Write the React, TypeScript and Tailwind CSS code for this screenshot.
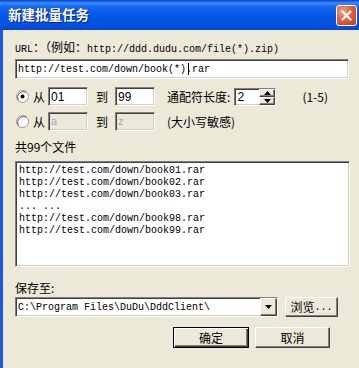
import React from 'react';

// classic win32 look helpers
const sunken = 'border border-t-[#808080] border-l-[#808080] border-b-white border-r-white shadow-[inset_1px_1px_0_#404040,inset_-1px_-1px_0_#d4d0c8]';
const raised = 'bg-[#ECE9D8] border border-t-white border-l-white border-b-[#404040] border-r-[#404040] shadow-[inset_-1px_-1px_0_#808080]';
const mono = "font-['Liberation_Mono','Noto_Sans_CJK_SC',monospace] text-[10px]";
const cjk = "font-['Noto_Sans_CJK_SC',sans-serif] text-[12px]";

const Mono = ({ children }: { children: React.ReactNode }) => <span className={mono}>{children}</span>

const Radio = ({ checked }: { checked?: boolean }) => (
  <svg width="13" height="13" viewBox="0 0 13 13" className="shrink-0">
    <circle cx="6.5" cy="6.5" r="6" fill="#fff" stroke="#9a9a9a" />
    <path d="M2.2 10.3 A6 6 0 0 1 10.3 2.2" fill="none" stroke="#5a5a5a" strokeWidth="1" />
    {checked && <circle cx="6.5" cy="6.5" r="2" fill="#000" />}
  </svg>
)

const Arrow = ({ up }: { up?: boolean }) => (
  <svg width="7" height="4" viewBox="0 0 7 4">
    <path d={up ? 'M3.5 0 L7 4 L0 4 Z' : 'M0 0 L7 0 L3.5 4 Z'} fill="#000" />
  </svg>
)

const files = [
  'http://test.com/down/book01.rar',
  'http://test.com/down/book02.rar',
  'http://test.com/down/book03.rar',
  '... ...',
  'http://test.com/down/book98.rar',
  'http://test.com/down/book99.rar',
]

export default function App() {
  return (
    <div className={`w-[359px] h-[368px] flex flex-col overflow-hidden ${cjk} text-black`}>
      {/* title bar */}
      <div className="h-[30px] shrink-0 flex items-center justify-between pl-[8px] pr-[2px] bg-[linear-gradient(180deg,#0a3fc8_0%,#3b8cff_10%,#1466ee_22%,#0558e6_50%,#0052e0_85%,#0a47cc_100%)]">
        <span className="text-white font-bold text-[13.5px] leading-none [text-shadow:1px_1px_0_#0a1f8c]">新建批量任务</span>
        <div className="w-[21px] h-[21px] rounded-[3px] border border-white flex items-center justify-center bg-[radial-gradient(circle_at_30%_30%,#f0a08a_0%,#e2603f_45%,#c23a17_100%)]">
          <svg width="11" height="11" viewBox="0 0 11 11">
            <path d="M1.5 1.5 L9.5 9.5 M9.5 1.5 L1.5 9.5" stroke="#fff" strokeWidth="2.2" strokeLinecap="round" />
          </svg>
        </div>
      </div>

      {/* body */}
      <div className="flex-1 flex flex-col bg-[#ECE9D8] border-l-[3px] border-l-[#1d55e0] pl-[12px]">
        <div className="mt-[10px] h-[14px] leading-[14px] whitespace-nowrap">
          <Mono>URL</Mono>：（例如：<Mono>http://ddd.dudu.com/file(*).zip)</Mono>
        </div>

        <div className={`mt-[5px] w-[334px] h-[20px] bg-white ${sunken} relative flex items-center pl-[2px] ${mono}`}>
          http://test.com/down/book(*).rar
          <span className="absolute left-[172px] top-[3px] w-[1px] h-[12px] bg-black" />
        </div>

        {/* range rows */}
        <div className="mt-[8px] h-[19px] flex items-center">
          <div className="ml-[1px]"><Radio checked /></div>
          <span className="ml-[4px]">从</span>
          <div className={`ml-[3px] w-[40px] h-[19px] bg-white ${sunken} pl-[2px] flex items-center font-['Liberation_Sans',sans-serif] text-[12px]`}>01</div>
          <span className="ml-[8px]">到</span>
          <div className={`ml-[7px] w-[40px] h-[19px] bg-white ${sunken} pl-[2px] flex items-center font-['Liberation_Sans',sans-serif] text-[12px]`}>99</div>
          <span className="ml-[12px] whitespace-nowrap">通配符长度<span className="text-[12px]">:</span></span>
          <div className={`ml-[4px] w-[42px] h-[18px] bg-white ${sunken} flex items-stretch`}>
            <div className="flex-1 pl-[2px] flex items-center font-['Liberation_Sans',sans-serif] text-[12px]">2</div>
            <div className="w-[16px] flex flex-col">
              <div className={`flex-1 ${raised} flex items-center justify-center`}><Arrow up /></div>
              <div className={`flex-1 ${raised} flex items-center justify-center`}><Arrow /></div>
            </div>
          </div>
          <span className="ml-[26px] whitespace-nowrap">(1-5)</span>
        </div>

        <div className="mt-[6px] h-[19px] flex items-center">
          <div className="ml-[1px]"><Radio /></div>
          <span className="ml-[4px]">从</span>
          <div className={`ml-[3px] w-[40px] h-[19px] bg-[#ECE9D8] ${sunken} pl-[2px] flex items-center font-['Liberation_Sans',sans-serif] text-[11px] text-[#a8a8a8]`}>a</div>
          <span className="ml-[8px]">到</span>
          <div className={`ml-[7px] w-[40px] h-[19px] bg-[#ECE9D8] ${sunken} pl-[2px] flex items-center font-['Liberation_Sans',sans-serif] text-[11px] text-[#a8a8a8]`}>z</div>
          <span className="ml-[12px] whitespace-nowrap">(大小写敏感)</span>
        </div>

        <div className="mt-[9px] h-[14px] leading-[14px]">共99个文件</div>

        <div className={`mt-[7px] w-[335px] h-[106px] bg-white ${sunken} pt-[3px] pl-[3px] ${mono} leading-[12px]`}>
          {files.map((f) => (
            <div key={f} className="h-[12px] whitespace-pre">{f}</div>
          ))}
        </div>

        <div className="mt-[14px] h-[14px] leading-[14px]">保存至:</div>

        <div className="mt-[2px] flex items-center">
          <div className={`w-[263px] h-[20px] bg-white ${sunken} flex items-stretch`}>
            <div className={`flex-1 pl-[2px] flex items-center ${mono}`}>C:\Program Files\DuDu\DddClient\</div>
            <div className={`w-[17px] ${raised} flex items-center justify-center`}><Arrow /></div>
          </div>
          <div className={`ml-[7px] w-[53px] h-[20px] ${raised} flex items-center justify-center`}>
            浏览<Mono>...</Mono>
          </div>
        </div>

        <div className="mt-[10px] pl-[158px] flex gap-[6px]">
          <div className="w-[76px] h-[21px] bg-[#ECE9D8] border border-black shadow-[inset_1px_1px_0_#fff,inset_-1px_-1px_0_#404040,inset_-2px_-2px_0_#808080] flex items-center justify-center">确定</div>
          <div className={`w-[75px] h-[21px] ${raised} flex items-center justify-center`}>取消</div>
        </div>
      </div>
    </div>
  );
}
